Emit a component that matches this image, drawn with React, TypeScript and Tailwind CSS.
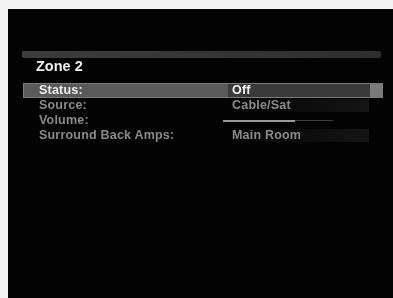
import React from "react";

const rows = [
  { label: "Status:", value: "Off", active: true },
  { label: "Source:", value: "Cable/Sat" },
  { label: "Volume:", value: null },
  { label: "Surround Back Amps:", value: "Main Room" },
];

export default function App() {
  return (
    <div className="w-[393px] h-[298px] bg-[#f4f4f4] pl-[8px] pt-[9px] overflow-hidden">
      <div
        className="w-full h-full bg-[#030303] pt-[42px] blur-[0.5px]"
        style={{ fontFamily: '"Liberation Sans", Arial, sans-serif' }}
      >
        <div className="ml-[14px] mr-[12px] h-[7px] rounded-[2px] bg-gradient-to-r from-[#3c3c3c] via-[#363636] to-[#2e2e2e]" />
        <div className="ml-[28px] mt-[1px] h-[14px] text-[14.5px] font-bold leading-[14px] text-[#f0f0f0]">
          Zone 2
        </div>

        <div className="mt-[10px] ml-[15px] mr-[10px] flex flex-col">
          {rows.map((r) => (
            <div
              key={r.label}
              className={
                r.active
                  ? "flex h-[15px] items-center border border-[#7a7a7a] bg-[#5a5a5a]"
                  : "flex h-[15px] items-center border border-transparent"
              }
            >
              <div
                className={
                  "w-[204px] shrink-0 pl-[15px] text-[12.5px] font-bold leading-none tracking-[0.2px] " +
                  (r.active ? "text-[#ececec]" : "text-[#8a8a8a]")
                }
              >
                {r.label}
              </div>
              {r.value === null ? (
                <div className="ml-[-5px] flex w-[111px] items-center">
                  <div className="h-[2px] w-[72px] bg-[#9a9a9a]" />
                  <div className="h-[1px] w-[38px] bg-[#3e3e3e]" />
                </div>
              ) : (
                <div
                  className={
                    "flex h-full flex-1 items-center " +
                    (r.active ? "bg-[#3a3a3a]" : "mr-[13px] bg-gradient-to-r from-transparent via-[#0c0c0c] to-[#141414]")
                  }
                >
                  <span
                    className={
                      "pl-[4px] text-[12.5px] font-bold leading-none tracking-[0.2px] " +
                      (r.active ? "text-[#f4f4f4]" : "text-[#8a8a8a]")
                    }
                  >
                    {r.value}
                  </span>
                  {r.active && <div className="ml-auto h-full w-[12px] bg-[#7a7a7a]" />}
                </div>
              )}
            </div>
          ))}
        </div>
      </div>
    </div>
  );
}
